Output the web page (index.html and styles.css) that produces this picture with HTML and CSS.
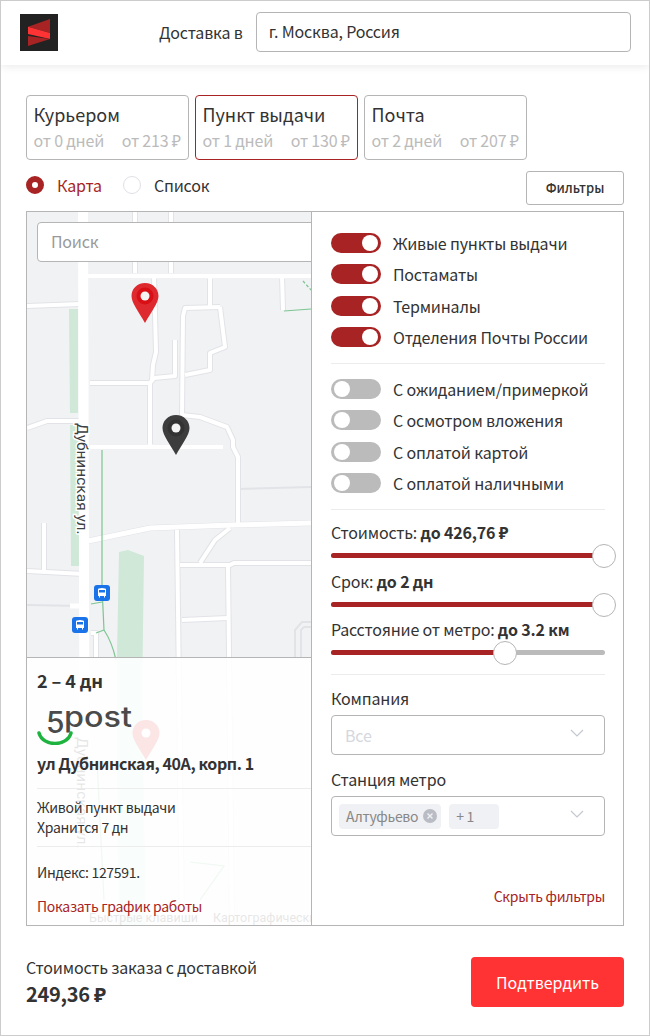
FILE: index.html
```html
<!DOCTYPE html>
<html lang="ru">
<head>
  <meta charset="utf-8">
  <title>Доставка</title>
  <link rel="stylesheet" href="styles.css">
</head>
<body>
<div class="page">

  <header class="top-bar">
    <svg class="logo" viewBox="0 0 38 37" width="38" height="37">
      <rect width="38" height="37" fill="#222"/>
      <path d="M30 5 L8 12.7 L30 19 Z" fill="#a82424"/>
      <path d="M8 12.7 L30 19 V25 L8 20 Z" fill="#ff3333"/>
      <path d="M8 22 L30 25 L8 32 Z" fill="#a82424"/>
    </svg>
    <span class="city-label">Доставка в</span>
    <div class="city-input">г. Москва, Россия</div>
  </header>

  <div class="tabs">
    <div class="tab">
      <div class="tab-title">Курьером</div>
      <div class="tab-sub"><span>от 0 дней</span><span>от 213 ₽</span></div>
    </div>
    <div class="tab active">
      <div class="tab-title">Пункт выдачи</div>
      <div class="tab-sub"><span>от 1 дней</span><span>от 130 ₽</span></div>
    </div>
    <div class="tab">
      <div class="tab-title">Почта</div>
      <div class="tab-sub"><span>от 2 дней</span><span>от 207 ₽</span></div>
    </div>
  </div>

  <div class="view-row">
    <div class="radio-item selected"><span class="radio"></span>Карта</div>
    <div class="radio-item"><span class="radio"></span>Список</div>
    <button class="filters-btn">Фильтры</button>
  </div>

  <div class="panel">
    <div class="map">
      <svg class="map-canvas" viewBox="27 212 284 713" width="284" height="713">
        <rect x="27" y="212" width="284" height="713" fill="#f1f2f4"/>

        <g fill="#cfe8d8">
          <path d="M69 309 H78 V413 H70 Z"/>
          <path d="M70 425 H79 V566 H71 Z"/>
          <path d="M119 552 L128 550 L144 556 L142 700 L146 925 H118 L117 657 Z"/>
        </g>

        <g class="roads-thin">
          <path d="M27 605 L84 606"/>
          <path d="M238 489 L311 487"/>
          <path d="M295 657 V630 L302 622 H311"/>
          <path d="M301 657 V630 L304 627 H311"/>
        </g>
        <g class="roads-case">
          <path d="M177 530 L182 925"/>
          <path d="M228 566 L232 925"/>
          <path d="M182 620 L228 618"/>
          <path d="M44 572 V523"/>
          <path d="M27 571 L84 574"/>
          <path d="M154 276 L156 352 L153 365 L152 380"/>
          <path d="M150 383 V447"/>
          <path d="M210 276 V306"/>
          <path d="M282 276 L283 310"/>
          <path d="M220 307 L185 308 L183 316 L182 415"/>
          <path d="M220 307 L225 347 L210 353 V370 L185 375"/>
          <path d="M182 415 L200 417 L227 427 L233 440 V447 L238 457 V523"/>
          <path d="M135 212 V273"/>
          <path d="M171 212 V273"/>
          <path d="M230 528 L215 540 L200 563"/>
          <path d="M180 565 H230 L234 563 H311"/>
          <path d="M90 383 H150 L154 378 L175 376 V340"/>
          <path d="M27 306 L80 304"/>
          <path d="M27 428 L47 421 H80"/>
          <path d="M91 633 H96 V657"/>
          <path d="M88 276 H311"/>
          <path d="M90 447 H223"/>
          <path d="M88 541 L150 528 L233 525 L311 523"/>
        </g>
        <g class="roads-white">
          <path d="M177 530 L182 925"/>
          <path d="M228 566 L232 925"/>
          <path d="M182 620 L228 618"/>
          <path d="M44 572 V523"/>
          <path d="M27 571 L84 574"/>
          <path d="M154 276 L156 352 L153 365 L152 380"/>
          <path d="M150 383 V447"/>
          <path d="M210 276 V306"/>
          <path d="M282 276 L283 310"/>
          <path d="M220 307 L185 308 L183 316 L182 415"/>
          <path d="M220 307 L225 347 L210 353 V370 L185 375"/>
          <path d="M182 415 L200 417 L227 427 L233 440 V447 L238 457 V523"/>
          <path d="M135 212 V273"/>
          <path d="M171 212 V273"/>
          <path d="M230 528 L215 540 L200 563"/>
          <path d="M180 565 H230 L234 563 H311"/>
          <path d="M90 383 H150 L154 378 L175 376 V340"/>
          <path d="M27 306 L80 304"/>
          <path d="M27 428 L47 421 H80"/>
          <path d="M91 633 H96 V657"/>
        </g>
        <g class="roads-main">
          <path d="M88 276 H311"/>
          <path d="M90 447 H223"/>
          <path d="M88 541 L150 528 L233 525 L311 523"/>
          <path d="M70 606 H84"/>
        </g>
        <path class="road-wide" d="M83 212 L85 925"/>

        <g class="paths">
          <path d="M102 450 V587 L104 630 Q112 642 116 660"/>
          <path d="M91 604 L102 602"/>
          <path d="M96 633 L104 630"/>
          <path d="M284 311 L311 309"/>
          <path d="M303 281 L311 290" stroke-dasharray="3 2"/>
          <path d="M97 760 L104 900 M200 900 L224 866 L190 862"/>
        </g>

        <text class="road-label" transform="translate(77 423) rotate(90)">Дубнинская ул.</text>

        <!-- bus stops -->
        <g transform="translate(94 585)">
          <rect width="16" height="16" rx="3" fill="#1a73e8"/>
          <path d="M4 4.500 Q4 3 8 3 Q12 3 12 4.500 V11 H11 V12.500 H10 V11 H6 V12.500 H5 V11 H4 Z M5 5 V7.500 H11 V5 Z" fill="#fff" fill-rule="evenodd"/>
        </g>
        <g transform="translate(72 617)">
          <rect width="16" height="16" rx="3" fill="#1a73e8"/>
          <path d="M4 4.500 Q4 3 8 3 Q12 3 12 4.500 V11 H11 V12.500 H10 V11 H6 V12.500 H5 V11 H4 Z M5 5 V7.500 H11 V5 Z" fill="#fff" fill-rule="evenodd"/>
        </g>

        <!-- pins -->
        <g transform="translate(132 283)">
          <path d="M13 0 C21 0 26.500 6 26.500 13 C26.500 20 19 29 13 40 C7 29 -0.500 20 -0.500 13 C-0.500 6 5 0 13 0 Z" fill="#de2a2e"/>
          <circle cx="13" cy="13" r="8.500" fill="#d80f14"/>
          <circle cx="13" cy="13" r="4.500" fill="#f4f4f4"/>
        </g>
        <g transform="translate(163 415)">
          <path d="M13 0 C21 0 26.500 6 26.500 13 C26.500 20 19 29 13 40 C7 29 -0.500 20 -0.500 13 C-0.500 6 5 0 13 0 Z" fill="#3d3d3d"/>
          <circle cx="13" cy="13" r="8.500" fill="#333"/>
          <circle cx="13" cy="13" r="4.500" fill="#f4f4f4"/>
        </g>
        <g transform="translate(133 720)">
          <path d="M13 0 C21 0 26.500 6 26.500 13 C26.500 20 19 29 13 40 C7 29 -0.500 20 -0.500 13 C-0.500 6 5 0 13 0 Z" fill="#de2a2e"/>
          <circle cx="13" cy="13" r="4.500" fill="#fff"/>
        </g>

        <text class="road-ghost" transform="translate(77 737) rotate(90)">Дубнинская ул.</text>
        <text class="map-credit" x="89" y="922">Быстрые клавиши</text>
        <text class="map-credit" x="213" y="922">Картографические</text>
      </svg>

      <div class="search">Поиск</div>

      <div class="point-card">
        <div class="point-days">2 – 4 дн</div>
        <svg class="point-logo" viewBox="0 0 100 42" width="100" height="42">
          <text class="logo-five" x="9" y="30">5</text>
          <text class="logo-post" x="27" y="24" textLength="68" lengthAdjust="spacingAndGlyphs">post</text>
          <path d="M2 30 C6 44 30 44 34 30" fill="none" stroke="#1db33e" stroke-width="3.500" stroke-linecap="round"/>
        </svg>
        <div class="point-address">ул Дубнинская, 40А, корп. 1</div>
        <div class="point-info">
          <div>Живой пункт выдачи</div>
          <div>Хранится 7 дн</div>
        </div>
        <div class="point-index">Индекс: 127591.</div>
        <a class="link">Показать график работы</a>
      </div>
    </div>

    <aside class="filters">
      <div class="switch-group first">
        <div class="switch-row"><span class="switch on"></span>Живые пункты выдачи</div>
        <div class="switch-row"><span class="switch on"></span>Постаматы</div>
        <div class="switch-row"><span class="switch on"></span>Терминалы</div>
        <div class="switch-row"><span class="switch on"></span>Отделения Почты России</div>
      </div>
      <div class="switch-group">
        <div class="switch-row"><span class="switch"></span>С ожиданием/примеркой</div>
        <div class="switch-row"><span class="switch"></span>С осмотром вложения</div>
        <div class="switch-row"><span class="switch"></span>С оплатой картой</div>
        <div class="switch-row"><span class="switch"></span>С оплатой наличными</div>
      </div>

      <div class="sliders">
        <div class="slider-item">
          <div class="slider-label">Стоимость: <b>до 426,76 ₽</b></div>
          <div class="track"><div class="track-fill" style="width: 100%"></div></div>
        </div>
        <div class="slider-item">
          <div class="slider-label">Срок: <b>до 2 дн</b></div>
          <div class="track"><div class="track-fill" style="width: 100%"></div></div>
        </div>
        <div class="slider-item">
          <div class="slider-label">Расстояние от метро: <b>до 3.2 км</b></div>
          <div class="track"><div class="track-fill" style="width: 64%"></div></div>
        </div>
      </div>

      <div class="select-group">
        <div class="select-label">Компания</div>
        <div class="select">
          <span class="select-placeholder">Все</span>
          <svg class="chevron" viewBox="0 0 14 8" width="14" height="8"><path d="M1 1 L7 7 L13 1" fill="none" stroke="#c4c8d0" stroke-width="1.200"/></svg>
        </div>
        <div class="select-label">Станция метро</div>
        <div class="select">
          <span class="chip">Алтуфьево
            <svg class="chip-x" viewBox="0 0 14 14" width="14" height="14"><circle cx="7" cy="7" r="7" fill="#b9bcc4"/><path d="M4.500 4.500 L9.500 9.500 M9.500 4.500 L4.500 9.500" stroke="#f0f1f4" stroke-width="1.400"/></svg>
          </span>
          <span class="chip chip-more">+ 1</span>
          <svg class="chevron" viewBox="0 0 14 8" width="14" height="8"><path d="M1 1 L7 7 L13 1" fill="none" stroke="#c4c8d0" stroke-width="1.200"/></svg>
        </div>
      </div>

      <a class="link hide-filters">Скрыть фильтры</a>
    </aside>
  </div>

  <footer class="summary">
    <div>
      <div class="summary-label">Стоимость заказа с доставкой</div>
      <div class="summary-price">249,36 ₽</div>
    </div>
    <button class="confirm-btn">Подтвердить</button>
  </footer>

</div>
</body>
</html>
```

FILE: styles.css
```css
* { box-sizing: border-box; }

body {
  margin: 0;
  font-family: "Noto Sans CJK SC", "Noto Sans", sans-serif;
  font-size: 16px;
  line-height: 20px;
  letter-spacing: -0.18px;
  color: #333;
  background: #fff;
}

.page {
  width: 650px;
  height: 1036px;
  border: 1px solid #ccc;
  overflow: hidden;
}

/* Top bar */
.top-bar {
  display: flex;
  align-items: center;
  height: 64px;
  padding: 0 18px 2px 19px;
  box-shadow: 0 2px 8px rgba(0,0,0,0.08);
}
.logo { margin-right: 101px; flex: none; }
.city-label { margin-right: 13px; }
.city-input {
  flex: 1;
  height: 40px;
  padding: 0 12px;
  line-height: 37px;
  border: 1px solid #b5b5b5;
  border-radius: 4px;
}

/* Delivery tabs */
.tabs {
  display: flex;
  gap: 6px;
  margin: 30px 0 0 25px;
}
.tab {
  width: 163px;
  height: 65px;
  padding: 6px 7px 0 7px;
  border: 1px solid #b5b5b5;
  border-radius: 4px;
}
.tab.active { border-color: #a82424; }
.tab-title { font-size: 18px; line-height: 24px; letter-spacing: 0; margin-left: -0.500px; }
.tab-sub {
  display: flex;
  justify-content: space-between;
  margin: 4px 0 0 -0.500px;
  color: #bbb;
}

/* Map / list */
.view-row {
  display: flex;
  align-items: center;
  height: 34px;
  margin: 11px 25px 6px 25px;
}
.radio-item {
  display: flex;
  align-items: center;
  margin-right: 21px;
  position: relative;
  top: -3px;
}
.radio {
  width: 18px;
  height: 18px;
  margin-right: 13px;
  border: 1px solid #dfe1e6;
  border-radius: 50%;
  background: #fff;
}
.radio-item.selected { color: #a82424; }
.radio-item.selected .radio { border: 6px solid #a82424; }
.filters-btn {
  margin-left: auto;
  width: 98px;
  height: 34px;
  border: 1px solid #b5b5b5;
  border-radius: 3px;
  background: #fff;
  font: inherit;
  font-size: 13px;
  font-weight: 500;
  letter-spacing: 0;
  color: #333;
}

/* Main panel */
.panel {
  display: flex;
  width: 598px;
  height: 715px;
  margin-left: 25px;
  border: 1px solid #b5b5b5;
}

.map {
  position: relative;
  flex: none;
  width: 285px;
  height: 713px;
  border-right: 1px solid #b5b5b5;
  overflow: hidden;
}
.map-canvas { display: block; }

.roads-thin path { stroke: #e2e3e7; stroke-width: 2; stroke-linejoin: round; fill: none; }
.roads-case path { stroke: #e2e3e7; stroke-width: 6; stroke-linejoin: round; fill: none; }
.roads-white path { stroke: #fff; stroke-width: 4; stroke-linejoin: round; fill: none; }
.roads-main path { stroke: #fff; stroke-width: 5; fill: none; }
.road-wide { stroke: #fff; stroke-width: 10; fill: none; }
.paths path { stroke: #7ec592; stroke-width: 1.200; fill: none; }

.road-label {
  font-family: Roboto, sans-serif;
  font-size: 15.500px;
  letter-spacing: 0;
  fill: #3c4043;
  stroke: #fff;
  stroke-width: 3;
  paint-order: stroke;
}
.road-ghost {
  font-family: Roboto, sans-serif;
  font-size: 15.500px;
  letter-spacing: 0;
  fill: #333;
}
.map-credit {
  font-family: Roboto, sans-serif;
  font-size: 12.500px;
  letter-spacing: 0;
  fill: #333;
}

.search {
  position: absolute;
  top: 10px;
  left: 10px;
  width: 290px;
  height: 40px;
  padding: 0 13px;
  line-height: 37px;
  color: #999;
  background: #fff;
  border: 1px solid #b5b5b5;
  border-radius: 4px;
}

.point-card {
  position: absolute;
  left: 0;
  right: 0;
  top: 445px;
  bottom: 0;
  padding: 12px 0 0 10px;
  font-size: 14px;
  letter-spacing: -0.3px;
  background: rgba(255,255,255,0.88);
  border-top: 1px solid #b5b5b5;
}
.point-days { font-size: 18px; font-weight: 700; line-height: 20px; letter-spacing: -0.1px; }
.point-logo { display: block; margin-top: 13px; }
.logo-five {
  font-family: Inter, sans-serif;
  font-size: 30px;
  font-weight: 500;
  letter-spacing: 0;
  fill: #4a4a4a;
}
.logo-post {
  font-family: Inter, sans-serif;
  font-size: 28px;
  font-weight: 500;
  letter-spacing: 0;
  fill: #4a4a4a;
}
.point-address {
  margin-top: 8px;
  padding-bottom: 15px;
  font-size: 16px;
  font-weight: 700;
  letter-spacing: -0.4px;
  border-bottom: 1px solid #ececec;
}
.point-info {
  padding: 8px 0 9px;
  border-bottom: 1px solid #ececec;
}
.point-index { margin-top: 15px; }
.link { color: #a82424; }
.point-card .link { display: block; margin-top: 14px; }

/* Filters */
.filters {
  flex: 1;
  padding: 0 18px 0 19px;
  display: flex;
  flex-direction: column;
}
.switch-group {
  padding: 15px 0 16px;
  border-bottom: 1px solid #ececec;
}
.switch-group.first { padding-top: 21px; }
.switch-row {
  display: flex;
  align-items: center;
  height: 20px;
  margin-bottom: 11.330px;
}
.switch-row:last-child { margin-bottom: 0; }
.switch {
  position: relative;
  width: 50px;
  height: 20px;
  margin-right: 12px;
  border-radius: 10px;
  background: #bbb;
}
.switch::after {
  content: "";
  position: absolute;
  top: 2px;
  left: 3px;
  width: 16px;
  height: 16px;
  border-radius: 50%;
  background: #fff;
}
.switch.on { background: #a82424; }
.switch.on::after { left: auto; right: 3px; }

.sliders {
  padding: 12px 0 19px;
  border-bottom: 1px solid #ececec;
}
.slider-item { margin-bottom: 12.700px; }
.slider-item:last-child { margin-bottom: 0; }
.slider-label { height: 20px; margin-bottom: 11px; }
.slider-label b { font-weight: 700; }
.track {
  height: 5px;
  border-radius: 3px;
  background: #bbb;
}
.track-fill {
  position: relative;
  height: 5px;
  border-radius: 3px;
  background: #a82424;
}
.track-fill::after {
  content: "";
  position: absolute;
  right: -11px;
  top: -9px;
  width: 22px;
  height: 22px;
  border-radius: 50%;
  background: #fff;
  border: 1px solid #b5b5b5;
}

.select-group { padding-top: 13px; }
.select-label { height: 20px; margin-bottom: 7px; }
.select {
  display: flex;
  align-items: center;
  gap: 8px;
  height: 40px;
  margin-bottom: 14px;
  padding: 0 8px 0 7px;
  border: 1px solid #b5b5b5;
  border-radius: 4px;
}
.select-placeholder { margin-left: 6px; color: #d5d8de; }
.chevron { margin-left: auto; margin-right: 12px; position: relative; top: -2px; }
.chip {
  display: flex;
  align-items: center;
  gap: 5px;
  height: 25px;
  padding: 0 4px 0 7px;
  font-size: 14px;
  letter-spacing: -0.3px;
  color: #888;
  background: #f0f1f4;
  border-radius: 4px;
}
.chip-more { width: 50px; }
.hide-filters {
  margin-top: auto;
  margin-bottom: 19px;
  text-align: right;
  font-size: 14px;
  letter-spacing: -0.3px;
}

/* Footer */
.summary {
  display: flex;
  justify-content: space-between;
  align-items: center;
  margin: 30px 25px 0;
}
.summary-label { line-height: 22px; }
.summary-price {
  margin-top: 3px;
  font-size: 20px;
  font-weight: 700;
  line-height: 26px;
  letter-spacing: -0.3px;
}
.confirm-btn {
  width: 153px;
  height: 50px;
  border: none;
  border-radius: 4px;
  background: #ff3333;
  color: #fff;
  font: inherit;
}
```
